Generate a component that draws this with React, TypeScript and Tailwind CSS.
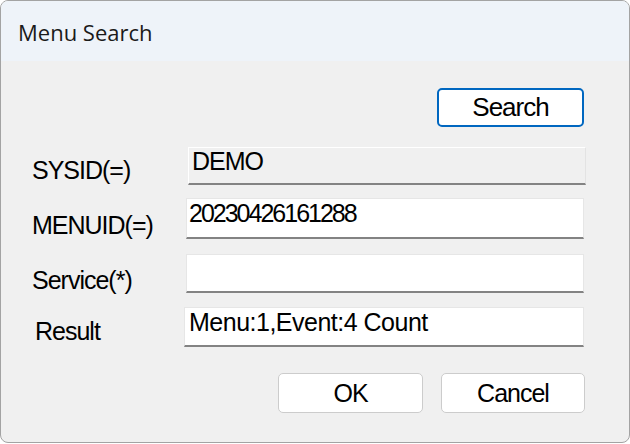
import React from 'react';

const font = { fontFamily: '"Liberation Sans", Arial, sans-serif' };

export default function App() {
  return (
    <div className="w-[630px] h-[444px] bg-white" style={font}>
      <div className="w-[630px] h-[443px] rounded-[8px] border border-[#a3a3a3] overflow-hidden flex flex-col bg-[#f0f0f0]">
        {/* title bar */}
        <div
          className="h-[60px] shrink-0 bg-[#eef3f9] flex items-center pl-[17px] pt-[3px] text-[22px] text-[#1a1a1a]"
          style={{ fontFamily: '"Open Sans", "Noto Sans", sans-serif' }}
        >
          Menu Search
        </div>

        {/* body */}
        <div className="flex-1 flex flex-col text-black">
          <div className="mt-[27px] ml-[436px]">
            <button className="w-[147px] h-[39px] bg-white border-2 border-[#0067c0] rounded-[5px] flex items-center justify-center pb-[1px] text-[26px] leading-none tracking-[-1px]">
              Search
            </button>
          </div>

          {/* SYSID */}
          <div className="mt-[20px] flex">
            <div className="w-[187px] pl-[31px] pt-[11px] text-[25px] leading-none tracking-[-1px]">SYSID(=)</div>
            <div className="w-[398px] h-[38px] bg-[#f0f0f0] border-t border-l border-white border-r border-r-[#e3e3e3] border-b-2 border-b-[#838383] pl-[3px] pt-[1px] text-[25px] leading-none tracking-[-1px]">
              DEMO
            </div>
          </div>

          {/* MENUID */}
          <div className="mt-[13px] flex">
            <div className="w-[185px] pl-[31px] pt-[15px] text-[25px] leading-none tracking-[-1px]">MENUID(=)</div>
            <div className="w-[398px] h-[41px] bg-white border-t border-l border-r border-[#e6e6e6] border-b-2 border-b-[#838383] pl-[2px] pt-[2px] text-[25px] leading-none tracking-[-2px]">
              20230426161288
            </div>
          </div>

          {/* Service */}
          <div className="mt-[15px] flex">
            <div className="w-[185px] pl-[31px] pt-[14px] text-[25px] leading-none tracking-[-1px]">Service(*)</div>
            <div className="w-[398px] h-[39px] bg-white border-t border-l border-r border-[#e6e6e6] border-b-2 border-b-[#838383]"></div>
          </div>

          {/* Result */}
          <div className="mt-[14px] flex">
            <div className="w-[183px] pl-[34px] pt-[12px] text-[25px] leading-none tracking-[-1px]">Result</div>
            <div className="w-[400px] h-[40px] bg-white border-t border-l border-r border-[#e6e6e6] border-b-2 border-b-[#838383] pl-[4px] pt-[2px] text-[25px] leading-none tracking-[-0.5px] whitespace-nowrap">
              Menu:1,Event:4 Count
            </div>
          </div>

          {/* buttons */}
          <div className="mt-[26px] ml-[277px] flex gap-[18px]">
            <button className="w-[145px] h-[40px] bg-white border border-[#cccccc] rounded-[5px] flex items-center justify-center text-[25px] leading-none tracking-[-1px]">
              OK
            </button>
            <button className="w-[144px] h-[40px] bg-white border border-[#cccccc] rounded-[5px] flex items-center justify-center text-[25px] leading-none tracking-[-1px]">
              Cancel
            </button>
          </div>
        </div>
      </div>
    </div>
  );
}
